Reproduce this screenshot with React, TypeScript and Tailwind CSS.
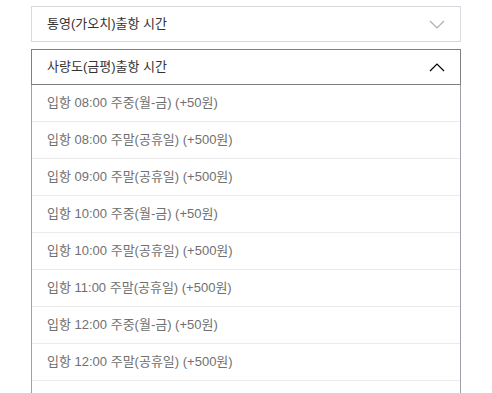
import React from "react";

const items = [
  "입항 08:00 주중(월-금) (+50원)",
  "입항 08:00 주말(공휴일) (+500원)",
  "입항 09:00 주말(공휴일) (+500원)",
  "입항 10:00 주중(월-금) (+50원)",
  "입항 10:00 주말(공휴일) (+500원)",
  "입항 11:00 주말(공휴일) (+500원)",
  "입항 12:00 주중(월-금) (+50원)",
  "입항 12:00 주말(공휴일) (+500원)",
  "",
];

const Chevron = ({ up, className }: { up?: boolean; className: string }) => (
  <svg width="16" height="9" viewBox="0 0 16 9" className={className}>
    <path
      d={up ? "M1 8 L8 1 L15 8" : "M1 1 L8 8 L15 1"}
      fill="none"
      stroke="currentColor"
      strokeWidth="1.2"
    />
  </svg>
);

export default function App() {
  return (
    <div
      className="w-[492px] h-[393px] overflow-hidden bg-white pl-[31px] pt-[6px]"
      style={{ fontFamily: '"Liberation Sans", "Noto Sans CJK KR", sans-serif' }}
    >
      <div className="w-[430px] flex flex-col gap-[7px]">
        <div className="h-[36px] border border-[#d6dadf] flex items-center justify-between pl-[15px] pr-[15px]">
          <span className="text-[13px] text-[#333]">통영(가오치)출항 시간</span>
          <Chevron className="text-[#a9aeb6]" />
        </div>

        <div className="flex flex-col">
          <div className="h-[36px] border border-[#808080] flex items-center justify-between pl-[15px] pr-[15px]">
            <span className="text-[13px] text-[#333]">사량도(금평)출항 시간</span>
            <Chevron up className="text-black" />
          </div>
          <ul className="border-x border-[#9da2a8]">
            {items.map((t, i) => (
              <li
                key={i}
                className="h-[37px] border-b border-[#ebebeb] flex items-center pl-[15px] text-[13px] text-[#707070]"
              >
                {t}
              </li>
            ))}
          </ul>
        </div>
      </div>
    </div>
  );
}
